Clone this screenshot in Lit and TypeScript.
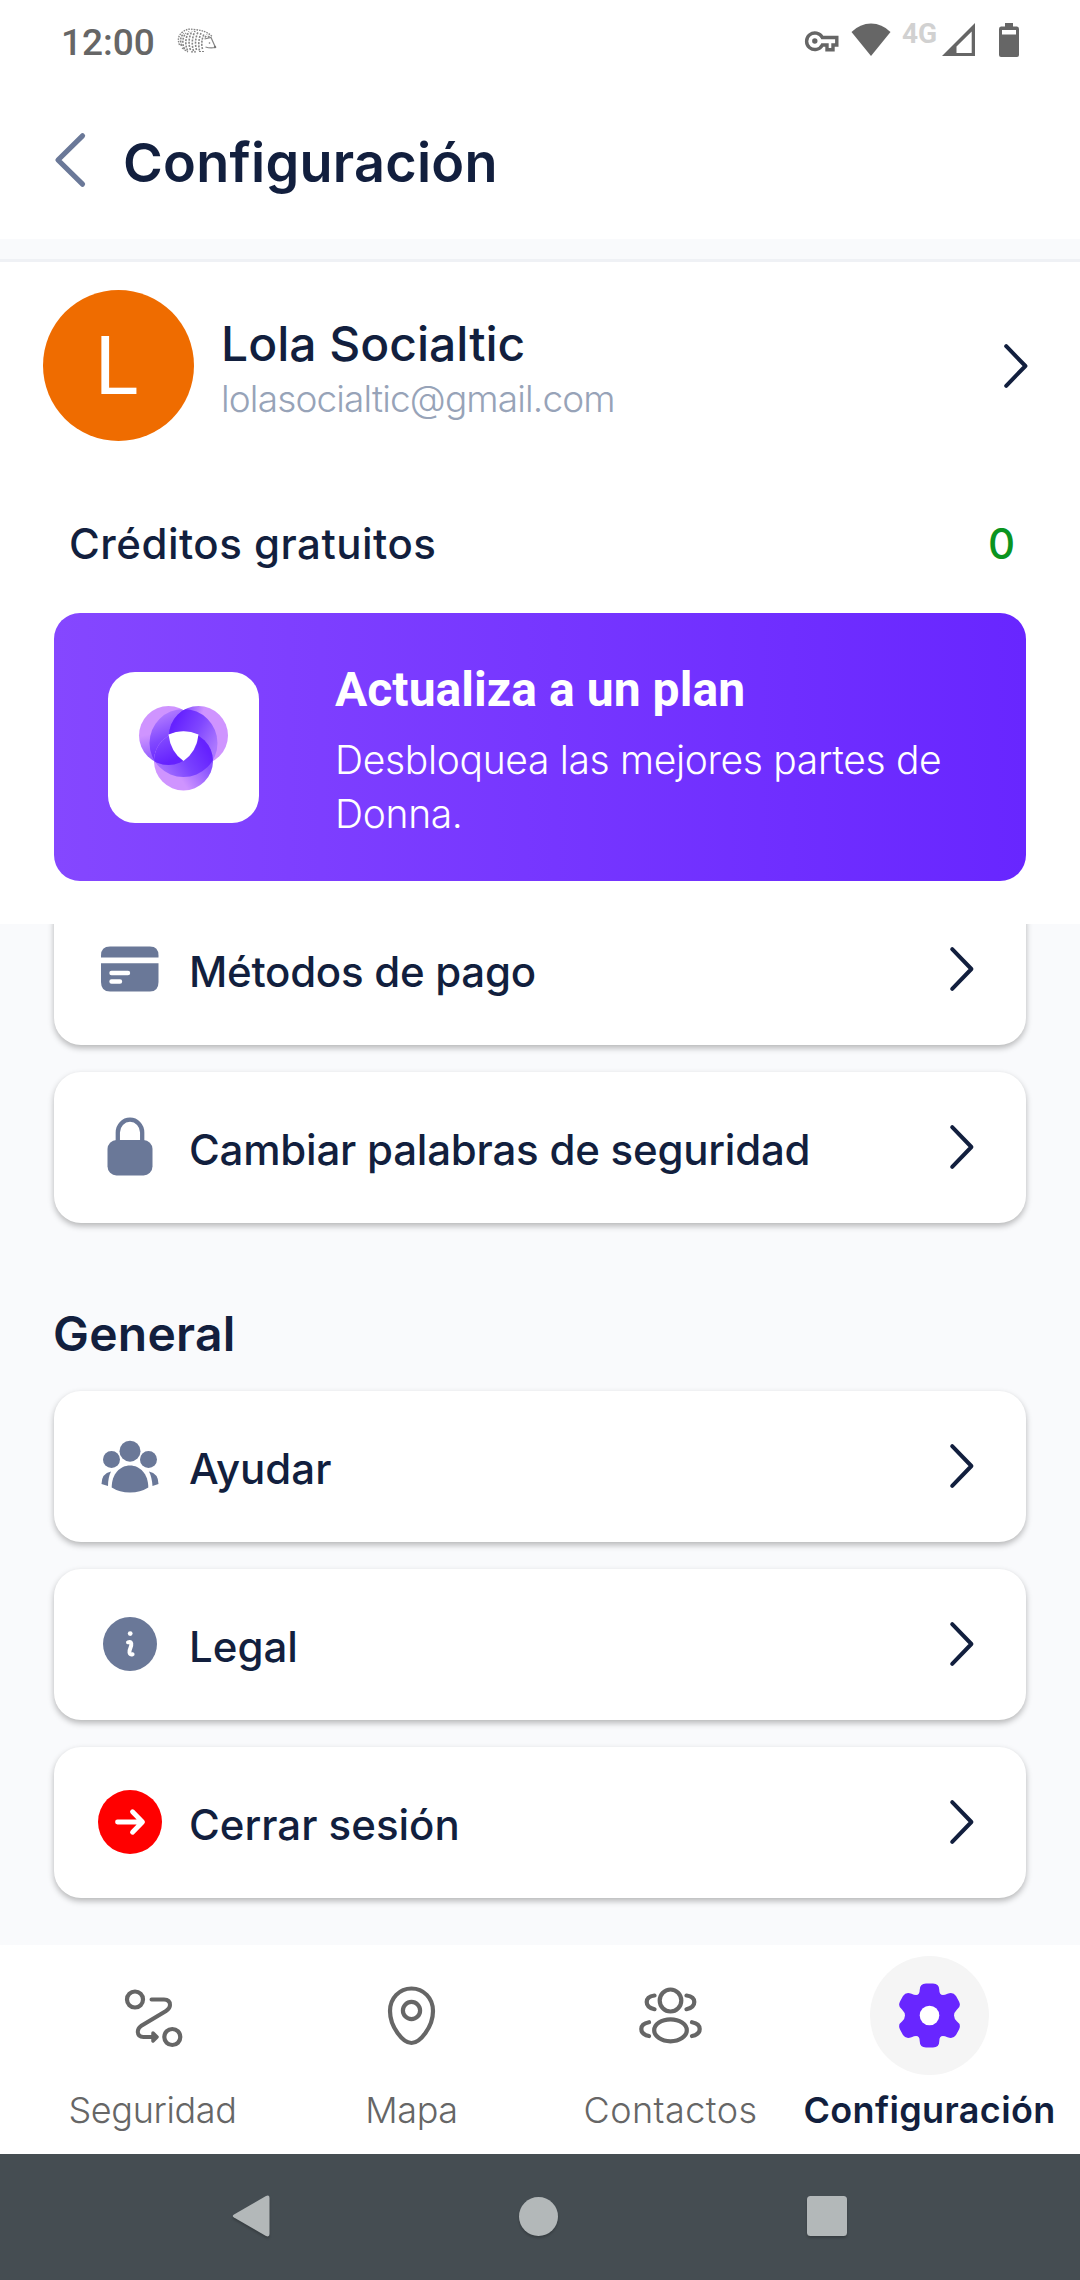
import { LitElement, html, css, svg } from "lit";
import { customElement } from "lit/decorators.js";

interface Row { icon: unknown; label: string; cls: string }

const chevron = html`<svg class="chev" width="24" height="44" viewBox="0 0 24 44"><path d="M2.2 2.2L21.4 22L2.2 41.8" fill="none" stroke="#121f3e" stroke-width="4" stroke-linecap="round" stroke-linejoin="round"/></svg>`;

const iconBox = (inner: unknown) => html`<svg class="icon" width="66" height="66" viewBox="0 0 66 66">${inner}</svg>`;

const cardIcon = iconBox(svg`
  <path d="M4 21.5V19.5Q4 10.500 13 10.500H53Q61.500 10.500 61.500 19.500V21.500Z" fill="#6a7898"/>
  <path d="M4 27.200H61.500V46Q61.500 55.500 53 55.500H13Q4 55.500 4 46Z" fill="#6a7898"/>
  <path d="M14.500 37H31M14.500 45.500H23" stroke="#fff" stroke-width="4.400" stroke-linecap="round"/>`);

const lockIcon = iconBox(svg`
  <path d="M20.800 31V18.500A12.200 12.800 0 0 1 45.200 18.500V31" fill="none" stroke="#6a7898" stroke-width="4.300"/>
  <rect x="10.500" y="26" width="45" height="35.500" rx="9" fill="#6a7898"/>`);

const groupIcon = iconBox(svg`
  <g fill="#6a7898"><circle cx="33" cy="18.200" r="10.500"/><circle cx="14.500" cy="26.500" r="8.500"/><circle cx="51.500" cy="26.500" r="8.500"/>
  <path d="M14.700 54.500C14.700 41 23 32.500 33 32.500S51.300 41 51.300 54.500Q43.500 59.500 33 59.500T14.700 54.500Z"/>
  <path d="M14 38.500Q4.500 40.500 4.500 51L11 53Q11 44.500 14 38.500Z"/>
  <path d="M52 38.500Q61.500 40.500 61.500 51L55.500 53Q55 44.500 52 38.500Z"/></g>`);

const infoIcon = iconBox(svg`
  <circle cx="33" cy="33" r="27" fill="#6a7898"/><circle cx="33.200" cy="22.600" r="2.400" fill="#fff"/>
  <path d="M31 31.300Q35 30 34.200 34.500L32.600 39.500Q31.800 44.200 35.600 43.200" fill="none" stroke="#fff" stroke-width="4" stroke-linecap="round"/>`);

const exitIcon = iconBox(svg`
  <circle cx="33" cy="33" r="32" fill="#f00"/>
  <path d="M20.500 33H45M35.500 22.800L45.500 33L35.500 43.200" fill="none" stroke="#fff" stroke-width="4.800" stroke-linecap="round" stroke-linejoin="round"/>`);

const accountRows: Row[] = [
  { icon: cardIcon, label: "Métodos de pago", cls: "t-pay" },
  { icon: lockIcon, label: "Cambiar palabras de seguridad", cls: "t-words" },
];
const generalRows: Row[] = [
  { icon: groupIcon, label: "Ayudar", cls: "t-help" },
  { icon: infoIcon, label: "Legal", cls: "t-legal" },
  { icon: exitIcon, label: "Cerrar sesión", cls: "t-exit" },
];

const routeTab = svg`<g fill="none" stroke="#666" stroke-width="4.200" stroke-linecap="round">
  <circle cx="42" cy="43.500" r="8"/><circle cx="79.300" cy="81" r="8"/>
  <path d="M58.500 43.500H71Q77 43.500 77 49Q77 52.500 73 55L48 70Q44.800 72.500 44.800 75.500Q44.800 81 50.500 81H60" stroke-width="4"/></g>
  <path d="M60 77L64 81L60 85Z" fill="#666" stroke="#666" stroke-width="3.500" stroke-linejoin="round"/>`;
const pinTab = svg`<g fill="none" stroke="#666" stroke-width="4.200"><path d="M59.500 32.500C71.500 32.500 81 42 81 55C81 71 68 87 59.500 87S38 71 38 55C38 42 47.500 32.500 59.500 32.500Z"/><circle cx="59.500" cy="54.500" r="8.600"/></g>`;
const contactsTab = svg`<g fill="none" stroke="#666" stroke-width="4.200" stroke-linecap="round">
  <ellipse cx="59.500" cy="44.500" rx="10.800" ry="11"/><ellipse cx="59.500" cy="74.300" rx="16.300" ry="11"/>
  <path d="M43.500 39.500Q35.700 40.500 35.700 46T43.500 53.200M75.500 39.500Q83.300 40.500 83.300 46T75.500 53.200M38 66.200Q30.300 67.500 30.300 73T38 80M81 66.200Q88.700 67.500 88.700 73T81 80"/></g>`;
const gearTab = svg`<circle cx="59.500" cy="59.500" r="59.500" fill="#f5f5f5"/>
  <path d="M56 27.500H63Q69.300 27.500 69.300 34Q69.300 41.500 77.500 37.800Q83 35.500 86 40L89 45.500Q91.500 50.500 87 53.500Q81 59.500 87 65.500Q91.500 68.500 89 73.500L86 79Q83 83.500 77.500 81.200Q69.300 77.500 69.300 85Q69.300 91.500 63 91.500H56Q49.700 91.500 49.700 85Q49.700 77.500 41.500 81.200Q36 83.500 33 79L30 73.500Q27.500 68.500 32 65.500Q38 59.500 32 53.500Q27.500 50.500 30 45.500L33 40Q36 35.500 41.500 37.800Q49.700 41.500 49.700 34Q49.700 27.500 56 27.500Z" fill="#6826ff"/><circle cx="59.500" cy="59.500" r="9.800" fill="#fff"/>`;

const tabs = [
  { art: routeTab, label: "Seguridad", cls: "tab-a" },
  { art: pinTab, label: "Mapa", cls: "tab-b" },
  { art: contactsTab, label: "Contactos", cls: "tab-c" },
  { art: gearTab, label: "Configuración", cls: "tab-on" },
];

@customElement("app-root")
export class AppRoot extends LitElement {
  static styles = css`
    :host { display: block; }
    * { box-sizing: border-box; }
    svg { display: block; flex: none; overflow: visible; }
    .screen { width: 1080px; height: 2280px; display: flex; flex-direction: column; background: #f9fafc; overflow: hidden; font-family: Inter, "Noto Sans", sans-serif; color: #121f3e; white-space: nowrap; }
    .status { height: 80px; background: #fff; display: flex; align-items: flex-start; padding: 0 61px 0 61px; font-family: Roboto, sans-serif; color: #666; }
    .clock { font-size: 37px; line-height: 44px; margin-top: 21px; width: 116px; font-weight: 500; }
    .hedgehog { margin-top: 28px; }
    .right { margin-left: auto; display: flex; align-items: flex-start; padding-top: 23px; }
    .key { margin: 8px 12px 0 0; }
    .wifi { margin-right: 11px; }
    .lte { font-size: 28px; line-height: 20px; font-weight: 700; color: #d1d1d1; width: 40px; padding-top: 1px; }
    .signal { margin-right: 24px; }
    .header { height: 159px; background: #fff; display: flex; align-items: flex-start; padding: 53px 0 0 55px; gap: 37px; }
    .title { font-size: 54px; font-weight: 600; line-height: 64px; margin-top: -2px; letter-spacing: .25px; }
    .rule { height: 23px; flex: none; border-bottom: 3px solid #eff1f5; }
    .top { height: 662px; flex: none; background: #fff; position: relative; z-index: 1; }
    .profile { display: flex; align-items: center; padding: 28px 52px 0 43px; }
    .avatar { width: 151px; height: 151px; border-radius: 50%; background: #ef6c00; color: #fff; font: 400 81px/153px Roboto, sans-serif; text-align: center; padding-right: 4px; }
    .who { margin-left: 27px; flex: 1; padding-top: 6px; }
    .name { font-size: 48px; font-weight: 500; line-height: 58px; }
    .mail { font-size: 37px; font-weight: 350; line-height: 46px; padding-top: 3px; color: #97a3b8; letter-spacing: -.85px; }
    .credits { display: flex; justify-content: space-between; padding: 0 65px 0 69px; margin-top: 77px; height: 95px; font-size: 42px; line-height: 52px; font-weight: 500; }
    .cr { letter-spacing: .5px; }
    .zero { color: #0a9420; }
    .banner { width: 972px; height: 268px; margin-left: 54px; border-radius: 26px; background: linear-gradient(90deg, #8547ff, #6826ff); display: flex; align-items: center; padding-left: 54px; color: #fff; }
    .logo { width: 151px; height: 151px; border-radius: 27px; background: #fff; margin-right: 76px; }
    .words { padding-top: 9px; }
    .plan { font: 700 48px/56px Roboto, sans-serif; margin-bottom: 15px; letter-spacing: .05px; }
    .desc { font-size: 39px; line-height: 54px; font-weight: 300; letter-spacing: -.33px; }
    .list { padding: 0 54px; margin-top: -30px; flex: 1; }
    .row { height: 151px; margin-bottom: 27px; border-radius: 27px; background: #fff; box-shadow: 0 3px 6px rgba(0,0,0,.28); display: flex; align-items: center; padding: 0 52px 0 43px; }
    .row svg { margin-bottom: 1px; }
    .label { margin-left: 26px; flex: 1; font-size: 42px; line-height: 52px; font-weight: 500; padding-top: 4px; }
    .t-pay { letter-spacing: -.27px; }
    .t-words { letter-spacing: -.22px; }
    .section { font-size: 48px; font-weight: 600; line-height: 58px; margin: 82px 0 28px -1px; letter-spacing: .25px; }
    .tabs { height: 209px; flex: none; background: #fff; display: flex; padding: 11px 21px 0 23px; }
    .tab { width: 259px; flex: none; display: flex; flex-direction: column; align-items: center; font-size: 36px; line-height: 44px; font-weight: 350; color: #666; }
    .tab svg { margin-bottom: 13px; }
    .tab-a, .tab-b { letter-spacing: -.35px; }
    .tab-c { letter-spacing: .45px; }
    .tab-on { font-weight: 600; color: #121f3e; letter-spacing: .35px; }
    .sys { height: 126px; flex: none; background: #454d52; display: grid; grid-template-columns: 288px 288px 288px; justify-content: center; align-items: center; justify-items: center; padding: 0 3px 2px 0; }
    .sys svg { filter: drop-shadow(0 2px 1px rgba(0,0,0,.2)); }
  `;

  private row(r: Row) {
    return html`<div class="row">${r.icon}<span class="label"><span class=${r.cls}>${r.label}</span></span>${chevron}</div>`;
  }

  render() {
    return html`<div class="screen">
      <div class="status">
        <span class="clock">12:00</span>
        <svg class="hedgehog" width="40" height="25" viewBox="0 0 40 25" fill="none" stroke="#858585">
          <path d="M2.500 17Q-.5 9 5 4.500T16 1.500Q29 2 35 8.500" stroke-width="1.400" stroke-dasharray="1.600 1"/>
          <path d="M4.500 18Q2 9 7 5.500M7.500 21Q3.500 12 9 5M10.500 22.500Q6.500 13 12 3.500M13.500 22Q10 13 15 3M16.500 23Q13.500 13 18 3M19.500 22Q17 13 21 4M22.500 22.500Q20.500 14 24 5M25.500 21Q23.500 14 27 6M28 9.500L30 6.500M31 9.500L33 7.500" stroke-width="1.600" stroke-dasharray="2 1.200"/>
          <path d="M5 20L11 24M14 23.800H19M22 23.500H27" stroke-width="1.200" stroke-dasharray="2 1"/>
          <path d="M27.500 11L34 9.500L38.500 19.500Q33 20.500 28.500 19" stroke="#858585" stroke-width="1.200"/><circle cx="32.500" cy="15" r=".8" fill="#777" stroke="none"/><circle cx="38" cy="19" r="1.200" fill="#777" stroke="none"/>
        </svg>
        <div class="right">
          <svg class="key" width="34" height="21" viewBox="0 0 34 21"><path d="M17.300 6.500H31.800V14H28V18.700H22V14H17.300A8.300 8.300 0 1 1 17.300 6.500Z" fill="none" stroke="#666" stroke-width="3.400"/><circle cx="9.800" cy="10" r="2.700" fill="#666"/></svg>
          <svg class="wifi" width="40" height="33" viewBox="0 0 40 33"><path d="M0.500 9Q9 .5 20 .5T39.500 9L20 33Z" fill="#666"/></svg>
          <span class="lte">4G</span>
          <svg class="signal" width="33" height="33" viewBox="0 0 33 33"><path d="M0 33L33 0V33ZM14.500 30H29.700V8.500L14.500 23.500Z" fill="#666" fill-rule="evenodd"/></svg>
          <svg width="20" height="34" viewBox="0 0 20 34"><path d="M6 0H14V3.500H18Q20 3.500 20 6V32Q20 34 18 34H2Q0 34 0 32V6Q0 3.500 2 3.500H6ZM3 7V11.500H17V7Z" fill="#666" fill-rule="evenodd"/></svg>
        </div>
      </div>
      <div class="header">
        <svg width="31" height="54" viewBox="0 0 31 54"><path d="M27.500 2.800L3 27L27.500 51.200" fill="none" stroke="#6a7898" stroke-width="5.200" stroke-linecap="round" stroke-linejoin="round"/></svg>
        <span class="title">Configuración</span>
      </div>
      <div class="rule"></div>
      <div class="top">
        <div class="profile">
          <div class="avatar">L</div>
          <div class="who"><div class="name">Lola Socialtic</div><div class="mail">lolasocialtic@gmail.com</div></div>
          ${chevron}
        </div>
        <div class="credits"><span class="cr">Créditos gratuitos</span><span class="zero">0</span></div>
        <div class="banner">
          <svg class="logo" viewBox="0 0 151 151">
            <defs>
              <linearGradient id="oa" gradientUnits="userSpaceOnUse" x1="42" y1="62" x2="48" y2="90"><stop offset="0" stop-color="#cf94ff"/><stop offset="1" stop-color="#8a55ff"/></linearGradient>
              <linearGradient id="ob" gradientUnits="userSpaceOnUse" x1="94" y1="44" x2="74" y2="38"><stop offset="0" stop-color="#cf94ff"/><stop offset="1" stop-color="#7a45ff"/></linearGradient>
              <linearGradient id="oc" gradientUnits="userSpaceOnUse" x1="76" y1="112" x2="100" y2="96"><stop offset="0" stop-color="#cf94ff"/><stop offset="1" stop-color="#8a55ff"/></linearGradient>
              <linearGradient id="ia" gradientUnits="userSpaceOnUse" x1="48" y1="44" x2="66" y2="88"><stop offset="0" stop-color="#b27cff"/><stop offset=".5" stop-color="#8148ff"/><stop offset="1" stop-color="#6522ff"/></linearGradient>
              <linearGradient id="ib" gradientUnits="userSpaceOnUse" x1="68" y1="48" x2="110" y2="70"><stop offset="0" stop-color="#6522ff"/><stop offset=".5" stop-color="#7f46ff"/><stop offset="1" stop-color="#ac78ff"/></linearGradient>
              <linearGradient id="ic" gradientUnits="userSpaceOnUse" x1="98" y1="76" x2="56" y2="102"><stop offset="0" stop-color="#6522ff"/><stop offset=".5" stop-color="#7a42ff"/><stop offset="1" stop-color="#a470ff"/></linearGradient>
              <clipPath id="ka"><circle cx="60.500" cy="63.500" r="29.500"/></clipPath>
              <clipPath id="kb"><circle cx="90.500" cy="63.500" r="29.500"/></clipPath>
              <clipPath id="kc"><circle cx="75.500" cy="89" r="29.500"/></clipPath>
            </defs>
            <circle cx="60.500" cy="63.500" r="29.500" fill="url(#oa)"/>
            <g clip-path="url(#ka)"><circle cx="75.500" cy="71" r="34" fill="url(#ia)"/></g>
            <circle cx="90.500" cy="63.500" r="29.500" fill="url(#ob)"/>
            <g clip-path="url(#kb)"><circle cx="75.500" cy="71" r="34" fill="url(#ib)"/></g>
            <circle cx="75.500" cy="89" r="29.500" fill="url(#oc)"/>
            <g clip-path="url(#kc)"><circle cx="75.500" cy="71" r="34" fill="url(#ic)"/></g>
            <g clip-path="url(#kc)"><circle cx="60.500" cy="63.500" r="29.500" fill="url(#oa)"/><g clip-path="url(#ka)"><circle cx="75.500" cy="71" r="34" fill="url(#ia)"/></g></g>
            <path d="M60.500 62.500Q75.500 56 90.500 62.500Q88.500 80 75.500 89Q62.500 80 60.500 62.500Z" fill="#fff"/>
          </svg>
          <div class="words"><div class="plan">Actualiza a un plan</div><div class="desc">Desbloquea las mejores partes de<br />Donna.</div></div>
        </div>
      </div>
      <div class="list">
        ${accountRows.map((r) => this.row(r))}
        <div class="section">General</div>
        ${generalRows.map((r) => this.row(r))}
      </div>
      <div class="tabs">${tabs.map((t) => html`<div class="tab ${t.cls}"><svg width="119" height="119" viewBox="0 0 119 119">${t.art}</svg><span>${t.label}</span></div>`)}</div>
      <div class="sys">
        <svg width="38" height="42" viewBox="0 0 38 42"><path d="M2 19.500L34 1Q37.500 -.5 37.500 3V39Q37.500 42.500 34 41L2 22.500Q-.5 21 2 19.500Z" fill="#b3b8b9"/></svg>
        <svg width="39" height="39" viewBox="0 0 39 39"><circle cx="19.500" cy="19.500" r="19.500" fill="#b3b8b9"/></svg>
        <svg width="40" height="40" viewBox="0 0 40 40"><rect width="40" height="40" rx="3.500" fill="#b3b8b9"/></svg>
      </div>
    </div>`;
  }
}
